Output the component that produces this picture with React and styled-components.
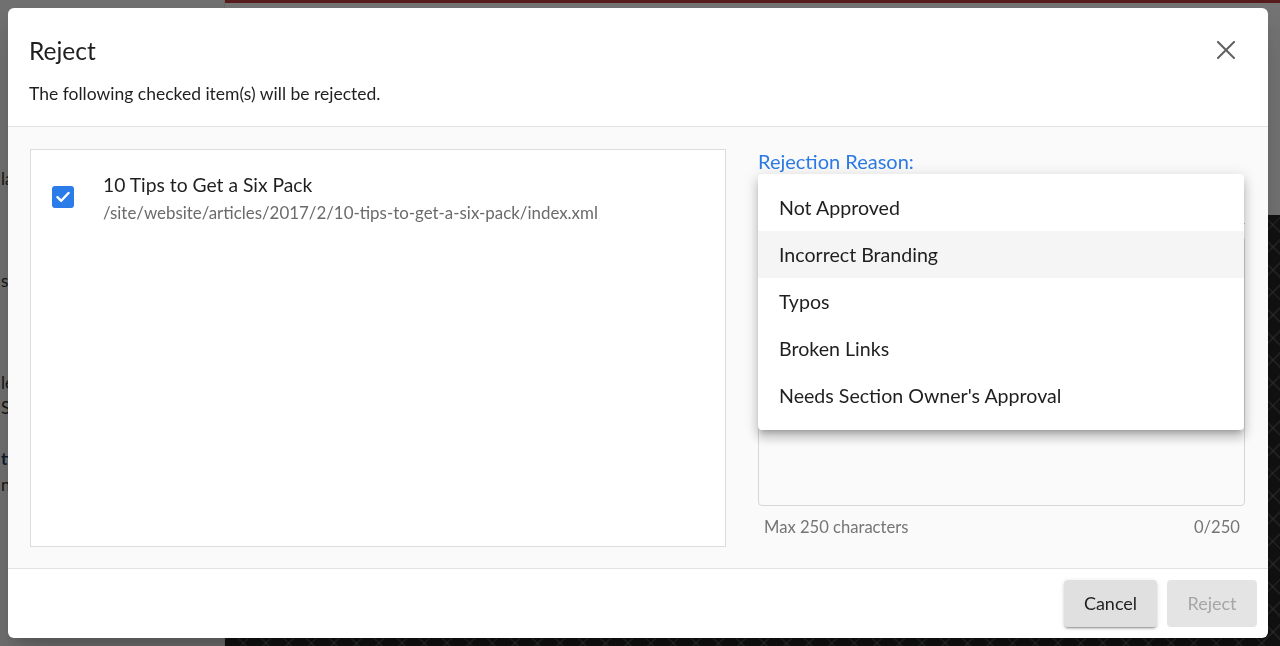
import React from 'react'
import styled, { createGlobalStyle } from 'styled-components'

const GlobalStyle = createGlobalStyle`
  html, body {
    margin: 0;
    padding: 0;
  }
  body {
    font-family: Lato, 'Noto Sans', sans-serif;
    color: #212121;
    overflow: hidden;
  }
  * {
    box-sizing: border-box;
  }
`

const reasons = ['Not Approved', 'Incorrect Branding', 'Typos', 'Broken Links', "Needs Section Owner's Approval"]

const sideLines = [
  { text: 'latest', top: 168 },
  { text: 'section', top: 270 },
  { text: 'learn more', top: 372 },
  { text: 'Six Pack', top: 397 },
  { text: 'tips', top: 448, bold: true },
  { text: 'name', top: 474 },
]

function CloseIcon() {
  return (
    <svg width="18" height="18" viewBox="0 0 18 18" fill="none">
      <path d="M1 1L17 17M17 1L1 17" stroke="#616161" strokeWidth="2" strokeLinecap="square" />
    </svg>
  )
}

function CheckIcon() {
  return (
    <svg width="14" height="12" viewBox="0 0 14 12" fill="none">
      <path d="M1.5 6.2L5.2 9.8L12.5 2" stroke="#fff" strokeWidth="2.4" strokeLinecap="round" strokeLinejoin="round" />
    </svg>
  )
}

function App() {
  return (
    <>
      <GlobalStyle />
      {/* page behind the dialog */}
      <Page>
        <Sidebar>
          {sideLines.map((l) => (
            <SideText key={l.text} $top={l.top} $bold={l.bold}>
              {l.text}
            </SideText>
          ))}
        </Sidebar>
        <Main>
          <RedBar />
          <MainTop />
          <Photo />
        </Main>
      </Page>
      <Backdrop />

      <Dialog>
        <Header>
          <TitleRow>
            <Title>Reject</Title>
            <CloseButton aria-label="close">
              <CloseIcon />
            </CloseButton>
          </TitleRow>
          <Subtitle>The following checked item(s) will be rejected.</Subtitle>
        </Header>

        <Body>
          <ItemsPanel>
            <ItemRow>
              <Checkbox>
                <CheckIcon />
              </Checkbox>
              <ItemText>
                <ItemTitle>10 Tips to Get a Six Pack</ItemTitle>
                <ItemPath>/site/website/articles/2017/2/10-tips-to-get-a-six-pack/index.xml</ItemPath>
              </ItemText>
            </ItemRow>
          </ItemsPanel>

          <ReasonColumn>
            <ReasonLabel>Rejection Reason:</ReasonLabel>
            <SelectField />
            <CommentBox />
            <HelperRow>
              <span>Max 250 characters</span>
              <span>0/250</span>
            </HelperRow>

            <Menu>
              {reasons.map((r, i) => (
                <MenuItem key={r} $active={i === 1}>
                  {r}
                </MenuItem>
              ))}
            </Menu>
          </ReasonColumn>
        </Body>

        <Footer>
          <Button $raised $w={93}>
            Cancel
          </Button>
          <Button disabled $w={90}>
            Reject
          </Button>
        </Footer>
      </Dialog>
    </>
  )
}

export default App

const Page = styled.div`
  display: grid;
  grid-template-columns: 225px 1fr;
  width: 1280px;
  height: 646px;
`

const Sidebar = styled.div`
  position: relative;
  background: #f9f9f9;
  border-right: 1px solid #e6e6e6;
`

const SideText = styled.div`
  position: absolute;
  left: 1px;
  top: ${(p) => p.$top}px;
  font-size: 17px;
  font-weight: ${(p) => (p.$bold ? 700 : 400)};
  color: ${(p) => (p.$bold ? '#1c3f6e' : '#333')};
`

const Main = styled.div`
  display: flex;
  flex-direction: column;
`

const RedBar = styled.div`
  height: 3px;
  background: #c43d3d;
`

const MainTop = styled.div`
  height: 212px;
  background: #ffffff;
`

const Photo = styled.div`
  flex: 1;
  background-color: #262626;
  background-image: repeating-linear-gradient(45deg, transparent 0 14px, rgba(120, 140, 130, 0.35) 14px 16px),
    repeating-linear-gradient(-45deg, transparent 0 14px, rgba(120, 140, 130, 0.35) 14px 16px);
`

const Backdrop = styled.div`
  position: fixed;
  inset: 0;
  background: rgba(0, 0, 0, 0.55);
`

const Dialog = styled.div`
  position: fixed;
  top: 8px;
  left: 8px;
  width: 1260px;
  height: 630px;
  display: flex;
  flex-direction: column;
  background: #fff;
  border-radius: 6px;
  overflow: hidden;
  box-shadow: 0 11px 15px -7px rgba(0, 0, 0, 0.2), 0 24px 38px 3px rgba(0, 0, 0, 0.14);
`

const Header = styled.div`
  height: 119px;
  padding: 22px 21px 0 21px;
  border-bottom: 1px solid #e3e3e3;
`

const TitleRow = styled.div`
  display: flex;
  align-items: center;
  justify-content: space-between;
`

const Title = styled.h2`
  margin: 0;
  font-size: 24.5px;
  font-weight: 400;
  line-height: 29px;
  color: #1f1f1f;
`

const CloseButton = styled.button`
  display: flex;
  align-items: center;
  justify-content: center;
  width: 40px;
  height: 40px;
  margin-right: 1px;
  padding: 0;
  border: none;
  background: transparent;
  cursor: pointer;
`

const Subtitle = styled.p`
  margin: 13px 0 0 0;
  font-size: 17.5px;
  line-height: 22px;
  color: #1f1f1f;
`

const Body = styled.div`
  flex: 1;
  display: flex;
  gap: 32px;
  padding: 22px 23px 21px 22px;
  background: #fafafa;
  border-bottom: 1px solid #e3e3e3;
`

const ItemsPanel = styled.div`
  width: 696px;
  background: #fff;
  border: 1px solid #dcdcdc;
  padding: 23px 21px;
`

const ItemRow = styled.div`
  display: flex;
  align-items: flex-start;
  gap: 29px;
`

const Checkbox = styled.span`
  display: flex;
  align-items: center;
  justify-content: center;
  flex-shrink: 0;
  width: 22px;
  height: 22px;
  margin-top: 13px;
  border-radius: 3px;
  background: #2b7ce9;
`

const ItemText = styled.div`
  display: flex;
  flex-direction: column;
`

const ItemTitle = styled.div`
  font-size: 19.3px;
  line-height: 24px;
  color: #1f1f1f;
`

const ItemPath = styled.div`
  margin-top: 3px;
  font-size: 16.9px;
  line-height: 26px;
  color: #6b6b6b;
`

const ReasonColumn = styled.div`
  position: relative;
  flex: 1;
  display: flex;
  flex-direction: column;
`

const ReasonLabel = styled.div`
  font-size: 20px;
  line-height: 25px;
  color: #2c7be5;
`

const SelectField = styled.div`
  height: 46px;
  margin-top: 4px;
  border-bottom: 1px solid #bdbdbd;
`

const CommentBox = styled.div`
  flex: 1;
  margin-top: 12px;
  border: 1px solid #d6d6d6;
  border-radius: 4px;
  background: #fafafa;
`

const HelperRow = styled.div`
  display: flex;
  justify-content: space-between;
  padding: 10px 5px 9px 6px;
  font-size: 16.6px;
  line-height: 22px;
  color: #757575;
`

const Menu = styled.div`
  position: absolute;
  top: 25px;
  left: 0;
  right: 1px;
  padding: 10px 0 11px;
  background: #fff;
  border-radius: 4px;
  box-shadow: 0 5px 5px -3px rgba(0, 0, 0, 0.2), 0 8px 10px 1px rgba(0, 0, 0, 0.14), 0 3px 14px 2px rgba(0, 0, 0, 0.12);
`

const MenuItem = styled.div`
  display: flex;
  align-items: center;
  height: 47px;
  padding: 0 21px;
  font-size: 19.6px;
  color: #1f1f1f;
  background: ${(p) => (p.$active ? '#f5f5f5' : 'transparent')};
`

const Footer = styled.div`
  height: 69px;
  display: flex;
  align-items: flex-start;
  justify-content: flex-end;
  gap: 10px;
  padding: 11px 11px 0 0;
`

const Button = styled.button`
  width: ${(p) => p.$w}px;
  height: 47px;
  padding: 0 0 2px;
  border: none;
  border-radius: 4px;
  font-family: Lato, 'Noto Sans', sans-serif;
  font-size: 18px;
  color: #1f1f1f;
  background: #e0e0e0;
  box-shadow: ${(p) =>
    p.$raised ? '0 3px 1px -2px rgba(0,0,0,0.2), 0 2px 2px 0 rgba(0,0,0,0.14), 0 1px 5px 0 rgba(0,0,0,0.12)' : 'none'};
  cursor: pointer;

  &:disabled {
    color: #a6a6a6;
    background: #e4e4e4;
    cursor: default;
  }
`
